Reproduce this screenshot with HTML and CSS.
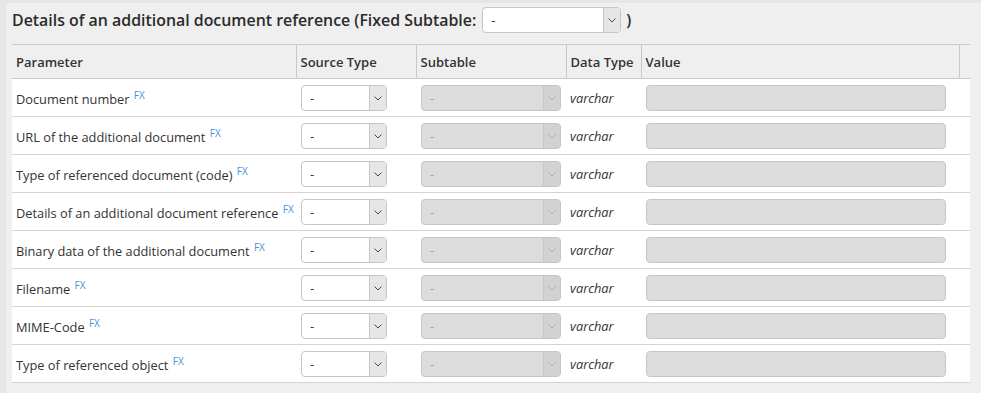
FILE: index.html
```html
<!DOCTYPE html>
<html lang="en">
<head>
  <meta charset="UTF-8">
  <title>Document reference parameters</title>
  <link rel="stylesheet" href="styles.css">
</head>
<body>
  <div class="panel">
    <div class="title">
      <span>Details of an additional document reference (Fixed Subtable:</span>
      <div class="dropdown title-dropdown">
        <span class="dropdown-text">-</span>
        <span class="dropdown-arrow"><svg width="10" height="6" viewBox="0 0 10 6"><path d="M1.5 1.5l3.5 3.5 3.5-3.5" fill="none" stroke="currentColor" stroke-width="1"/></svg></span>
      </div>
      <span>)</span>
    </div>

    <table class="params">
      <thead>
        <tr>
          <th class="col-param">Parameter</th>
          <th class="col-source">Source Type</th>
          <th class="col-sub">Subtable</th>
          <th class="col-type">Data Type</th>
          <th class="col-value">Value</th>
          <th class="col-end"></th>
        </tr>
      </thead>
      <tbody id="rows"></tbody>
    </table>
  </div>

  <script>
    // Parameters of the additional document reference
    const params = [
      "Document number",
      "URL of the additional document",
      "Type of referenced document (code)",
      "Details of an additional document reference",
      "Binary data of the additional document",
      "Filename",
      "MIME-Code",
      "Type of referenced object"
    ];

    const arrow = '<svg width="10" height="6" viewBox="0 0 10 6"><path d="M1.5 1.5l3.5 3.5 3.5-3.5" fill="none" stroke="currentColor" stroke-width="1"/></svg>';

    const tbody = document.getElementById("rows");
    params.forEach(function (name) {
      const tr = document.createElement("tr");
      tr.innerHTML =
        '<td class="name">' + name + ' <sup class="fx">FX</sup></td>' +
        '<td><div class="dropdown source"><span class="dropdown-text">-</span><span class="dropdown-arrow">' + arrow + '</span></div></td>' +
        '<td><div class="dropdown subtable disabled"><span class="dropdown-text">-</span><span class="dropdown-arrow">' + arrow + '</span></div></td>' +
        '<td class="type">varchar</td>' +
        '<td><div class="value-input"></div></td>' +
        '<td></td>';
      tbody.appendChild(tr);
    });
  </script>
</body>
</html>
```

FILE: styles.css
```css
/* Basic reset */
* {
  box-sizing: border-box;
  margin: 0;
  padding: 0;
}

body {
  font-family: 'Open Sans', 'Liberation Sans', sans-serif;
  background-color: #e6e6e6;
  color: #333;
  font-size: 12.8px;
}

.panel {
  margin: 3px 0 0 6px;
  padding: 4px 11px 10px 6px;
  background-color: #efefef;
  border-radius: 4px 0 0 0;
  min-height: 390px;
}

.title {
  display: flex;
  align-items: center;
  gap: 5px;
  height: 26px;
  margin-bottom: 11px;
  font-size: 15.9px;
  font-weight: 600;
  color: #2b2b2b;
}

/* Fake select boxes */
.dropdown {
  display: flex;
  align-items: stretch;
  height: 26px;
  background-color: #fff;
  border: 1px solid #c6c6c6;
  border-radius: 4px;
  overflow: hidden;
}

.dropdown-text {
  flex: 1;
  display: flex;
  align-items: center;
  padding-left: 8px;
  font-size: 13px;
  font-weight: 400;
  color: #333;
}

.dropdown-arrow {
  width: 17px;
  display: flex;
  align-items: center;
  justify-content: center;
  background-color: #e6e6e6;
  border-left: 1px solid #c6c6c6;
  color: #4a4a4a;
}

.title-dropdown {
  width: 139px;
  margin-left: 1px;
}

.source {
  width: 86px;
}

.subtable {
  width: 140px;
}

.dropdown.disabled {
  background-color: #dcdcdc;
  border-color: #c6c6c6;
}

.dropdown.disabled .dropdown-text {
  color: #a0a0a0;
}

.dropdown.disabled .dropdown-arrow {
  background-color: #d2d2d2;
  border-left-color: #c6c6c6;
  color: #b0b0b0;
}

.value-input {
  width: 300px;
  height: 26px;
  background-color: #dcdcdc;
  border: 1px solid #c6c6c6;
  border-radius: 4px;
}

/* Table */
.params {
  width: 958px;
  border-collapse: collapse;
  table-layout: fixed;
}

.params th {
  height: 34px;
  padding: 0 4px;
  text-align: left;
  font-weight: 600;
  font-size: 13px;
  color: #333;
  background-color: #efefef;
  border-top: 1px solid #c8c8c8;
  border-bottom: 1px solid #c8c8c8;
  border-right: 1px solid #c8c8c8;
}

.params th:last-child {
  border-right: none;
}

.col-param { width: 284px; }
.col-source { width: 120px; }
.col-sub { width: 150px; }
.col-type { width: 75px; }
.col-value { width: 318px; }
.col-end { width: 11px; }

.params td {
  height: 38px;
  padding: 0 4px;
  background-color: #fff;
  border-bottom: 1px solid #d4d4d4;
  vertical-align: middle;
}

.params td.name {
  white-space: nowrap;
  padding-right: 0;
}

.params td:nth-child(2),
.params td:nth-child(3),
.params td:nth-child(5) {
  padding-left: 5px;
}

.fx {
  font-size: 10px;
  color: #4a90d9;
  vertical-align: 5px;
  margin-left: 1px;
}

.type {
  font-style: italic;
}
```
